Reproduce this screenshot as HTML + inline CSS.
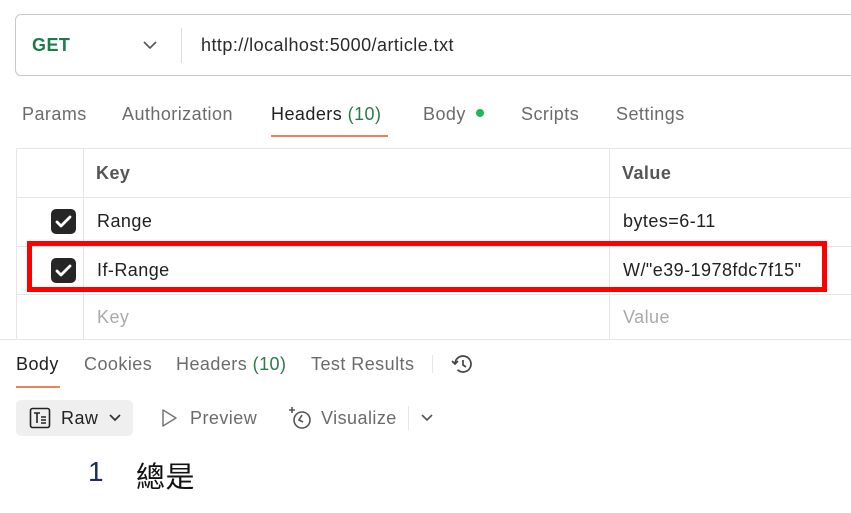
<!DOCTYPE html><html><head><style>
body{margin:0;width:851px;height:513px;background:#fff;font-family:"Liberation Sans",sans-serif;position:relative;overflow:hidden;color:#212121}
.a{position:absolute;white-space:nowrap;letter-spacing:0.45px}
.t{font-size:18px;color:#6b6b6b}
.hl{position:absolute;background:#e6e6e6;height:1px}
.vl{position:absolute;background:#e6e6e6;width:1px}
.cb{position:absolute;width:25px;height:25px;background:#262626;border-radius:5px}
</style></head><body>
<div class="a" style="left:15px;top:14px;width:850px;height:60px;border:1px solid #c8c8c8;border-radius:6px"></div>
<div class="a" style="left:32px;top:35px;font-size:18px;font-weight:bold;color:#1d7a4a">GET</div>
<svg class="a" style="left:142px;top:39px" width="16" height="12"><path d="M2 3l6 6 6-6" stroke="#555" stroke-width="1.6" fill="none"/></svg>
<div class="vl" style="left:181px;top:28px;height:35px;background:#ddd"></div>
<div class="a" style="left:201px;top:35px;font-size:18px;color:#2a2a2a">http://localhost:5000/article.txt</div>
<div class="a t" style="left:22px;top:104px">Params</div>
<div class="a t" style="left:122px;top:104px">Authorization</div>
<div class="a" style="left:271px;top:104px;font-size:18px;color:#222">Headers <span style="color:#2c7a4a">(10)</span></div>
<div class="a" style="left:271px;top:135px;width:117px;height:2px;background:#e8835e"></div>
<div class="a t" style="left:423px;top:104px">Body</div>
<div class="a" style="left:476px;top:109px;width:8px;height:8px;border-radius:50%;background:#1fb75a"></div>
<div class="a t" style="left:521px;top:104px">Scripts</div>
<div class="a t" style="left:616px;top:104px">Settings</div>
<div class="hl" style="left:16px;top:148px;width:835px"></div>
<div class="hl" style="left:16px;top:197px;width:835px"></div>
<div class="hl" style="left:16px;top:246px;width:835px"></div>
<div class="hl" style="left:16px;top:294px;width:835px"></div>
<div class="hl" style="left:0;top:339px;width:851px"></div>
<div class="vl" style="left:16px;top:148px;height:191px"></div>
<div class="vl" style="left:83px;top:148px;height:191px"></div>
<div class="vl" style="left:609px;top:148px;height:191px"></div>
<div class="a" style="left:96px;top:163px;font-size:18px;font-weight:bold;color:#555">Key</div>
<div class="a" style="left:622px;top:163px;font-size:18px;font-weight:bold;color:#555">Value</div>
<div class="cb" style="left:51px;top:209px"></div>
<svg class="a" style="left:51px;top:209px" width="25" height="25"><path d="M6 13l4 4 9-9" stroke="#fff" stroke-width="2.8" fill="none" stroke-linecap="round" stroke-linejoin="round"/></svg>
<div class="cb" style="left:51px;top:258px"></div>
<svg class="a" style="left:51px;top:258px" width="25" height="25"><path d="M6 13l4 4 9-9" stroke="#fff" stroke-width="2.8" fill="none" stroke-linecap="round" stroke-linejoin="round"/></svg>
<div class="a" style="left:97px;top:211px;font-size:18px">Range</div>
<div class="a" style="left:623px;top:211px;font-size:18px">bytes=6-11</div>
<div class="a" style="left:97px;top:260px;font-size:18px">If-Range</div>
<div class="a" style="left:623px;top:260px;font-size:18px">W/"e39-1978fdc7f15"</div>
<div class="a" style="left:27px;top:241px;width:790px;height:41px;border:5px solid #f00"></div>
<div class="a" style="left:97px;top:307px;font-size:18px;color:#aaa">Key</div>
<div class="a" style="left:623px;top:307px;font-size:18px;color:#aaa">Value</div>
<div class="a" style="left:16px;top:354px;font-size:18px;color:#222">Body</div>
<div class="a" style="left:16px;top:386px;width:44px;height:2px;background:#e8835e"></div>
<div class="a t" style="left:84px;top:354px">Cookies</div>
<div class="a t" style="left:176px;top:354px">Headers <span style="color:#2c7a4a">(10)</span></div>
<div class="a t" style="left:311px;top:354px">Test Results</div>
<div class="vl" style="left:432px;top:355px;height:18px"></div>
<svg class="a" style="left:450px;top:352px" width="26" height="24" fill="none" stroke="#444" stroke-width="1.7"><path d="M5 12a8 8 0 1 1 2.5 5.8"/><path d="M2 9l3 3 3-3"/><path d="M13 8v5l3 2"/></svg>
<div class="a" style="left:16px;top:400px;width:117px;height:36px;background:#efefef;border-radius:5px"></div>
<svg class="a" style="left:29px;top:407px" width="22" height="22" fill="none" stroke="#222" stroke-width="1.6"><rect x="1.5" y="1.5" width="19" height="19" rx="2"/><path d="M5 6h6M8 6v10M12 10h5M12 13h5M12 16h5"/></svg>
<div class="a" style="left:61px;top:408px;font-size:18px;color:#222">Raw</div>
<svg class="a" style="left:108px;top:412px" width="14" height="12"><path d="M2 3l5 5 5-5" stroke="#333" stroke-width="1.7" fill="none"/></svg>
<svg class="a" style="left:160px;top:408px" width="20" height="20"><path d="M3 2l13 8-13 8z" stroke="#777" stroke-width="1.5" fill="none" stroke-linejoin="round"/></svg>
<div class="a t" style="left:190px;top:408px">Preview</div>
<svg class="a" style="left:288px;top:405px" width="26" height="26" fill="none" stroke="#555" stroke-width="1.6"><circle cx="14" cy="15" r="8"/><path d="M14 10l-3 5 4 2"/><path d="M4 2v6M1 5h6"/></svg>
<div class="a t" style="left:321px;top:408px">Visualize</div>
<div class="vl" style="left:408px;top:406px;height:24px"></div>
<svg class="a" style="left:420px;top:412px" width="14" height="12"><path d="M2 3l5 5 5-5" stroke="#555" stroke-width="1.6" fill="none"/></svg>
<div class="a" style="left:88px;top:456px;font-size:28px;color:#1d2b5e">1</div>
<div class="a" style="left:136px;top:454px;font-size:29px;color:#111;font-family:'Liberation Sans','Noto Sans CJK TC',sans-serif">總是</div>
</body></html>
